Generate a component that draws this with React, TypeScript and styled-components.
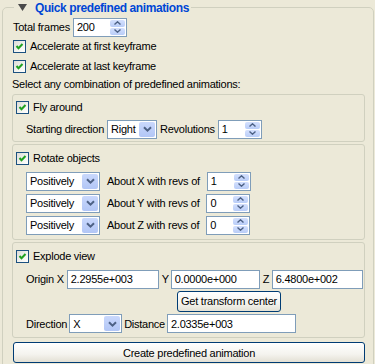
import React from 'react';
import styled, { createGlobalStyle } from 'styled-components';

const GlobalStyle = createGlobalStyle`
    html, body {
        margin: 0;
        padding: 0;
        background: #ece9d8;
    }
    body {
        font-family: "Liberation Sans", Arial, sans-serif;
        font-size: 11px;
        letter-spacing: -0.25px;
        color: #000;
    }
`;

const Page = styled.div`
    width: 375px;
    height: 364px;
    overflow: hidden;
    background: #ece9d8;
`;

const Group = styled.fieldset`
    box-sizing: border-box;
    width: 371px;
    height: 420px;
    margin: 0 0 0 2px;
    padding: 0 8px 0 9px;
    border: 1px solid #d0d0bf;
    border-radius: 5px;
`;

const Legend = styled.legend`
    display: flex;
    align-items: center;
    gap: 8px;
    height: 15px;
    margin-left: 2px;
    padding: 0 2px 0 4px;
    font-size: 12px;
    font-weight: 700;
    letter-spacing: -0.4px;
    color: #0046d5;
`;

const Row = styled.div<{ $h: number; $indent?: number; $gap?: number }>`
    display: flex;
    align-items: center;
    height: ${(p) => p.$h}px;
    padding-left: ${(p) => p.$indent ?? 0}px;
    gap: ${(p) => p.$gap ?? 3}px;
    white-space: nowrap;
`;

const AxisLabel = styled.span`
    width: 6px;
`;

const Box = styled.div<{ $mt?: number; $pb?: number }>`
    box-sizing: border-box;
    margin-top: ${(p) => p.$mt ?? 0}px;
    padding: 1px 0 ${(p) => p.$pb ?? 1}px 3px;
    border: 1px solid #d0d0bf;
    border-radius: 3px;
`;

const CheckLabel = styled.label`
    display: flex;
    align-items: center;
    gap: 4px;
`;

const CheckSquare = styled.span`
    box-sizing: border-box;
    display: inline-flex;
    width: 13px;
    height: 13px;
    border: 1px solid #1c5180;
    background: linear-gradient(135deg, #dcdcd7 0%, #f4f4f0 60%, #ffffff 100%);
`;

const Field = styled.div<{ $w: number }>`
    box-sizing: border-box;
    position: relative;
    display: flex;
    align-items: center;
    width: ${(p) => p.$w}px;
    height: 19px;
    padding-left: 3px;
    border: 1px solid #7f9db9;
    background: #fff;
`;

const Spin = styled.div`
    position: absolute;
    top: 1px;
    right: 1px;
    bottom: 1px;
    width: 15px;
    display: flex;
    flex-direction: column;
    gap: 1px;
`;

const SpinHalf = styled.div`
    flex: 1;
    display: flex;
    align-items: center;
    justify-content: center;
    border-radius: 2px;
    background: linear-gradient(180deg, #d4e0fd 0%, #b9cdf8 100%);
`;

const DropBtn = styled.div`
    position: absolute;
    top: 1px;
    right: 1px;
    bottom: 1px;
    width: 16px;
    display: flex;
    align-items: center;
    justify-content: center;
    border-radius: 2px;
    background: linear-gradient(180deg, #c9d8fc 0%, #b2c6f6 100%);
`;

const Button = styled.div<{ $w: number; $ml?: number }>`
    box-sizing: border-box;
    display: flex;
    align-items: center;
    justify-content: center;
    width: ${(p) => p.$w}px;
    height: 21px;
    margin-left: ${(p) => p.$ml ?? 0}px;
    border: 1px solid #003c74;
    border-radius: 3px;
    background: linear-gradient(180deg, #ffffff 0%, #f4f3ee 60%, #e3e0d4 100%);
`;

const Check: React.FC<{ label: string }> = ({ label }) => (
    <CheckLabel>
        <CheckSquare>
            <svg width="11" height="11" viewBox="0 0 11 11">
                <polyline points="2.5,5 4.5,7.2 8.5,3" fill="none" stroke="#21a121" strokeWidth="2" />
            </svg>
        </CheckSquare>
        {label}
    </CheckLabel>
);

const SpinBox: React.FC<{ value: string; w: number }> = ({ value, w }) => (
    <Field $w={w}>
        {value}
        <Spin>
            <SpinHalf>
                <svg width="7" height="4" viewBox="0 0 7 4">
                    <polyline points="0.5,3.5 3.5,0.8 6.5,3.5" fill="none" stroke="#4d6185" strokeWidth="1.4" />
                </svg>
            </SpinHalf>
            <SpinHalf>
                <svg width="7" height="4" viewBox="0 0 7 4">
                    <polyline points="0.5,0.5 3.5,3.2 6.5,0.5" fill="none" stroke="#4d6185" strokeWidth="1.4" />
                </svg>
            </SpinHalf>
        </Spin>
    </Field>
);

const Combo: React.FC<{ value: string; w: number }> = ({ value, w }) => (
    <Field $w={w}>
        {value}
        <DropBtn>
            <svg width="9" height="6" viewBox="0 0 9 6">
                <polyline points="1,1.2 4.5,4.6 8,1.2" fill="none" stroke="#4d6185" strokeWidth="2" />
            </svg>
        </DropBtn>
    </Field>
);

const axes = [
    { axis: 'X', revs: '1' },
    { axis: 'Y', revs: '0' },
    { axis: 'Z', revs: '0' },
];

const App: React.FC = () => (
    <Page>
        <GlobalStyle />
        <Group>
            <Legend>
                <svg width="9" height="7" viewBox="0 0 9 7">
                    <polygon points="0,0 9,0 4.5,7" fill="#4a4a4a" />
                </svg>
                Quick predefined animations
            </Legend>

            <Row $h={18} $indent={1} $gap={3} style={{ marginTop: 3 }}>
                Total frames
                <SpinBox value="200" w={54} />
            </Row>
            <Row $h={20} $indent={1}>
                <Check label="Accelerate at first keyframe" />
            </Row>
            <Row $h={20} $indent={1}>
                <Check label="Accelerate at last keyframe" />
            </Row>
            <Row $h={16}>Select any combination of predefined animations:</Row>

            <Box $mt={2}>
                <Row $h={22}>
                    <Check label="Fly around" />
                </Row>
                <Row $h={22} $indent={10}>
                    Starting direction
                    <Combo value="Right" w={50} />
                    Revolutions
                    <SpinBox value="1" w={44} />
                </Row>
            </Box>

            <Box $mt={2} $pb={3}>
                <Row $h={24}>
                    <Check label="Rotate objects" />
                </Row>
                {axes.map((a) => (
                    <Row key={a.axis} $h={22} $indent={10} $gap={7}>
                        <Combo value="Positively" w={74} />
                        About {a.axis} with revs of
                        <SpinBox value={a.revs} w={44} />
                    </Row>
                ))}
            </Box>

            <Box $mt={2} $pb={2}>
                <Row $h={24}>
                    <Check label="Explode view" />
                </Row>
                <Row $h={22} $indent={10}>
                    Origin X
                    <Field $w={92}>2.2955e+003</Field>
                    <AxisLabel>Y</AxisLabel>
                    <Field $w={89}>0.0000e+000</Field>
                    <AxisLabel>Z</AxisLabel>
                    <Field $w={91}>6.4800e+002</Field>
                </Row>
                <Row $h={22}>
                    <Button $w={104} $ml={161}>Get transform center</Button>
                </Row>
                <Row $h={23} $indent={10} $gap={2}>
                    Direction
                    <Combo value="X" w={53} />
                    Distance
                    <Field $w={129}>2.0335e+003</Field>
                </Row>
            </Box>

            <Button $w={352} $ml={1} style={{ marginTop: 4 }}>
                Create predefined animation
            </Button>
        </Group>
    </Page>
);

export default App;
